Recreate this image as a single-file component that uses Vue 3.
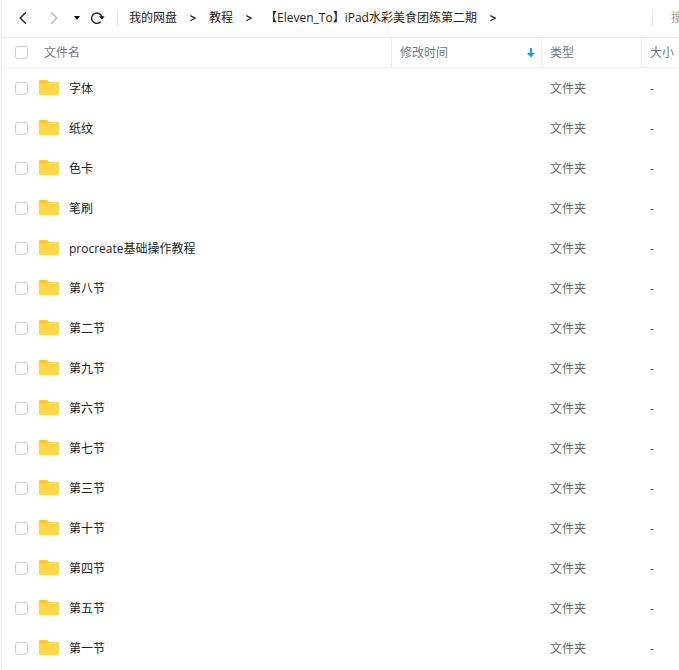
<script setup>
import { ref } from 'vue'

const crumbs = ['我的网盘', '教程', '【Eleven_To】iPad水彩美食团练第二期']

const names = [
  '字体', '纸纹', '色卡', '笔刷', 'procreate基础操作教程',
  '第八节', '第二节', '第九节', '第六节', '第七节',
  '第三节', '第十节', '第四节', '第五节', '第一节',
]

const files = ref(names.map((name) => ({ name, type: '文件夹', size: '-', checked: false })))
const query = ref('')

function toggleAll(event) {
  files.value.forEach((file) => { file.checked = event.target.checked })
}
</script>

<template>
  <main class="drive">
    <header class="toolbar">
      <button class="tool back" type="button" aria-label="后退">
        <svg width="8" height="14" viewBox="0 0 8 14"><path d="M7 1.2 1.2 7 7 12.8" /></svg>
      </button>
      <button class="tool forward" type="button" aria-label="前进">
        <svg width="8" height="14" viewBox="0 0 8 14"><path d="M1 1.2 6.8 7 1 12.8" /></svg>
      </button>
      <button class="tool history" type="button" aria-label="历史">
        <svg width="6" height="4" viewBox="0 0 6 4"><path d="M0 0H6L3 4Z" /></svg>
      </button>
      <button class="tool reload" type="button" aria-label="刷新">
        <svg width="14" height="12" viewBox="0 0 14 12">
          <path class="arc" d="M9.6 9.8A5.2 5.2 0 1 1 10.9 5" />
          <path class="tip" d="M8 4.3H13.6L10.9 7.4Z" />
        </svg>
      </button>
      <nav class="crumbs">
        <template v-for="crumb in crumbs" :key="crumb">
          <a class="crumb" href="#">{{ crumb }}</a>
          <svg class="sep" width="6" height="8" viewBox="0 0 6 8"><path d="M0.3 1.6 5.4 4.2 0.3 6.8" /></svg>
        </template>
      </nav>
      <div class="search">
        <input v-model="query" type="search" placeholder="搜" aria-label="搜">
      </div>
    </header>

    <table class="files">
      <colgroup>
        <col>
        <col class="col-time">
        <col class="col-type">
        <col class="col-size">
      </colgroup>
      <thead>
        <tr>
          <th>
            <div class="name-cell">
              <input class="tick" type="checkbox" aria-label="全选" @change="toggleAll">
              <span>文件名</span>
            </div>
          </th>
          <th>
            <div class="sorted">
              <span>修改时间</span>
              <svg width="8" height="10" viewBox="0 0 8 10"><path d="M3 0H5V5H8L4 9.6 0 5H3Z" /></svg>
            </div>
          </th>
          <th>类型</th>
          <th>大小</th>
        </tr>
      </thead>
      <tbody>
        <tr v-for="(file, i) in files" :key="file.name">
          <td class="name">
            <div class="name-cell">
              <input :id="`file-${i}`" v-model="file.checked" class="tick" type="checkbox">
              <label class="file" :for="`file-${i}`">
                <svg class="folder" width="20" height="16" viewBox="0 0 20 16">
                  <path class="folder-back" d="M0 1.5Q0 0 1.5 0H7.6Q8.5 0 9 .7L10.2 2.2H18.5Q20 2.2 20 3.7V9H0Z" />
                  <path class="folder-front" d="M0 3.8H8.2Q9 3.8 9.5 3.3L10.4 2.6H18.5Q20 2.6 20 4V13.8Q20 15.3 18.5 15.3H1.5Q0 15.3 0 13.8Z" />
                </svg>
                <span>{{ file.name }}</span>
              </label>
            </div>
          </td>
          <td></td>
          <td>{{ file.type }}</td>
          <td>{{ file.size }}</td>
        </tr>
      </tbody>
    </table>
  </main>
</template>

<style>
body {
  background: #fff;
}
</style>

<style scoped>
.drive {
  box-sizing: border-box;
  min-height: 100vh;
  margin-left: 1px;
  border-left: 1px solid #ececec;
  overflow: hidden;
  color: #222;
  font: 12px/20px "Open Sans", "Noto Sans CJK SC", sans-serif;
}

.toolbar {
  display: flex;
  align-items: center;
  box-sizing: border-box;
  height: 38px;
  padding: 0 0 2px 17px;
  border-bottom: 1px solid #ececec;
}

.tool {
  display: flex;
  flex: none;
  padding: 0;
  border: 0;
  background: none;
}

.tool path {
  fill: none;
  stroke: #222;
  stroke-width: 1.4;
}

.forward {
  margin-left: 23px;
}

.forward path {
  stroke: #bbb;
}

.history {
  margin-left: 16px;
}

.history path,
.reload .tip {
  fill: #111;
  stroke: none;
}

.reload {
  margin-left: 11px;
}

.crumbs {
  display: flex;
  flex: 1;
  align-items: center;
  min-width: 0;
  height: 16px;
  margin-left: 12px;
  padding-left: 11px;
  border-left: 1px solid #e4e4e4;
  white-space: nowrap;
}

.crumb {
  color: #222;
  text-decoration: none;
}

.sep {
  flex: none;
  margin: 0 13px;
}

.sep path {
  fill: none;
  stroke: #222;
  stroke-width: 1.2;
}

.search {
  flex: none;
  width: 26px;
  height: 16px;
  overflow: hidden;
  border-left: 1px solid #e4e4e4;
}

.search input {
  display: block;
  width: 120px;
  height: 16px;
  box-sizing: border-box;
  padding: 0 0 0 18px;
  border: 0;
  outline: 0;
  background: none;
  font: inherit;
  line-height: 16px;
  appearance: none;
}

.search input::placeholder {
  color: #999;
  opacity: 1;
}

.files {
  width: 100%;
  table-layout: fixed;
  border-collapse: separate;
  border-spacing: 0;
}

.col-time {
  width: 150px;
}

.col-type {
  width: 100px;
}

.col-size {
  width: 37px;
}

th,
td {
  box-sizing: border-box;
  padding: 0 0 0 8px;
  text-align: left;
  font-weight: 400;
  white-space: nowrap;
  color: #666;
}

th {
  height: 30px;
  border-right: 1px solid #ececec;
  border-bottom: 1px solid #f0f0f0;
  color: #777;
}

th:last-child {
  border-right: 0;
}

td {
  height: 40px;
  padding-top: 2px;
}

td.name {
  padding-top: 0;
}

.name-cell {
  display: flex;
  align-items: center;
  padding-left: 5px;
}

.tick {
  flex: none;
  width: 13px;
  height: 13px;
  margin: 0 16px 0 0;
  border: 1px solid #ccc;
  border-radius: 3px;
  background: #fff;
  appearance: none;
}

.tick:checked {
  border-color: #06a7ff;
  background: #06a7ff;
}

td .tick {
  margin-right: 11px;
}

.file {
  display: flex;
  align-items: center;
  gap: 10px;
  color: #222;
}

.file span {
  padding-top: 2px;
}

.folder-back {
  fill: #ffc72b;
}

.folder-front {
  fill: #ffd747;
}

.sorted {
  display: flex;
  align-items: center;
  justify-content: space-between;
  padding-right: 6px;
}

.sorted path {
  fill: #06a7ff;
}
</style>
